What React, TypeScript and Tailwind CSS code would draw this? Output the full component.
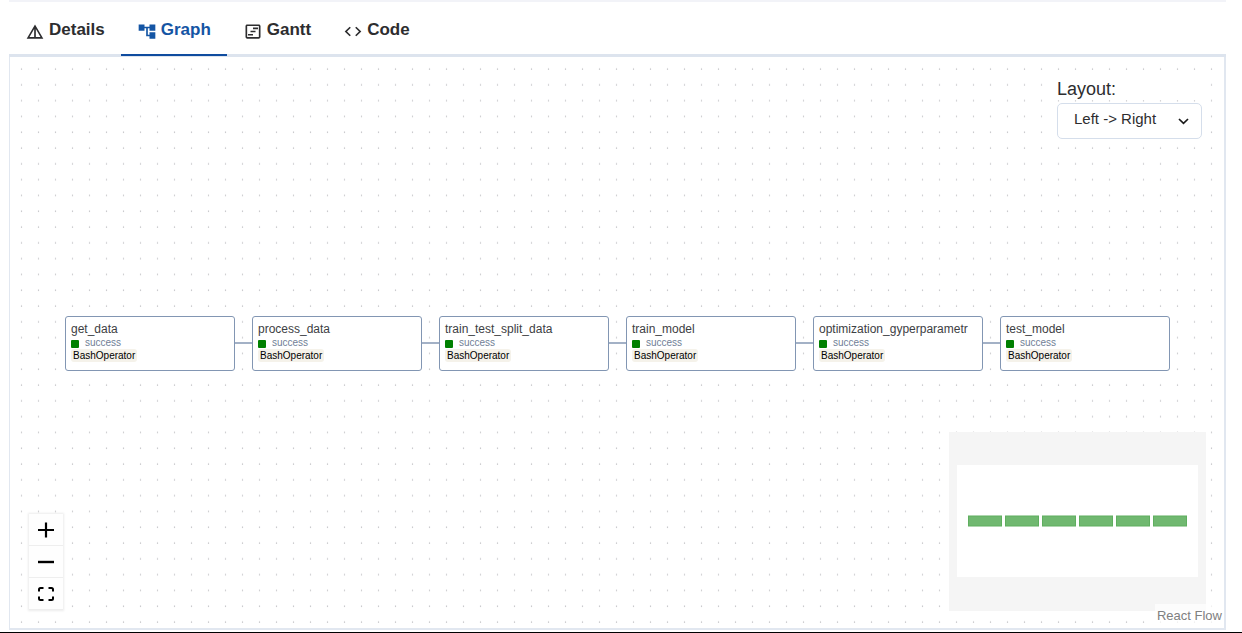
import { useState } from "react";
import { MdAccountTree, MdCode, MdDetails, MdOutlineViewTimeline } from "react-icons/md";

const tabs = [
  { name: "Details", Icon: MdDetails },
  { name: "Graph", Icon: MdAccountTree },
  { name: "Gantt", Icon: MdOutlineViewTimeline },
  { name: "Code", Icon: MdCode },
];

const NODE_WIDTH = 170;
const NODE_TOP = 259;

const nodes = [
  { id: "get_data", x: 55 },
  { id: "process_data", x: 242 },
  { id: "train_test_split_data", x: 429 },
  { id: "train_model", x: 616 },
  { id: "optimization_gyperparametr", x: 803 },
  { id: "test_model", x: 990 },
];

function TaskNode({ id, x }: { id: string; x: number }) {
  return (
    <div
      className="absolute flex h-[55px] flex-col rounded-[3px] border border-[#8296b3] bg-white px-[5px] pt-[5px]"
      style={{ left: x, top: NODE_TOP, width: NODE_WIDTH }}
    >
      <div className="text-[12px] leading-[14px] text-[#3d4043]">{id}</div>
      <div className="flex items-center gap-[6px] text-[10px] leading-[13px] text-[#718096]">
        <span className="mt-[2px] size-2 rounded-[1px] bg-[#008000]" />
        success
      </div>
      <div className="self-start rounded-[3px] bg-[#f5f2ea] px-[2px] text-[10px] leading-[13px] text-black">
        BashOperator
      </div>
    </div>
  );
}

function MiniMap() {
  return (
    <svg className="absolute right-[18px] bottom-[17px]" width="257" height="179" role="img" aria-label="Mini map">
      <rect width="257" height="179" fill="#f5f5f5" />
      <rect x="8" y="33" width="241" height="112" fill="#ffffff" />
      {nodes.map((node, i) => (
        <rect
          key={node.id}
          x={19.5 + i * 37}
          y="84"
          width="33"
          height="10"
          fill="#70b870"
          stroke="#5fae5f"
        />
      ))}
    </svg>
  );
}

function Controls() {
  const button = "flex h-8 w-[34px] items-center justify-center border-b border-[#eeeeee] bg-[#fefefe]";
  return (
    <div className="absolute bottom-[18px] left-[19px] flex flex-col shadow-[0_0_2px_1px_rgba(0,0,0,0.08)]">
      <button className={button} aria-label="Zoom in">
        <svg width="16" height="16" viewBox="0 0 16 16" stroke="#000" strokeWidth="2.2">
          <path d="M8 0.5v15M0 8h16" />
        </svg>
      </button>
      <button className={button} aria-label="Zoom out">
        <svg width="16" height="16" viewBox="0 0 16 16" stroke="#000" strokeWidth="2.4">
          <path d="M0 8h16" />
        </svg>
      </button>
      <button className={button} aria-label="Fit view">
        <svg width="16" height="14" viewBox="0 0 16 14" fill="none" stroke="#000" strokeWidth="2">
          <path d="M1 4.5V2.5Q1 1 2.5 1H5.5M10.5 1H13.5Q15 1 15 2.5V4.5M15 9.5V11.5Q15 13 13.5 13H10.5M5.5 13H2.5Q1 13 1 11.5V9.5" />
        </svg>
      </button>
    </div>
  );
}

export default function App() {
  const [active, setActive] = useState("Graph");
  return (
    <div className="flex h-screen flex-col border-b border-black bg-white font-['Liberation_Sans',Arial,sans-serif]">
      <div className="mr-4 mb-[2px] ml-[9px] flex min-h-0 flex-1 flex-col">
        <div className="h-[2px] shrink-0 bg-[#f2f3f8]" />
        <div role="tablist" className="flex h-[55px] shrink-0 shadow-[inset_0_-3px_0_#dde4ee]">
          {tabs.map(({ name, Icon }) => (
            <button
              key={name}
              role="tab"
              aria-selected={active === name}
              onClick={() => setActive(name)}
              className={
                active === name
                  ? "flex h-[54px] items-start gap-1 border-b-2 border-[#0f4c9f] px-4 pt-[18px] text-[17px] leading-5 font-bold text-[#1455a4]"
                  : "flex h-[54px] items-start gap-1 border-b-2 border-transparent px-4 pt-[18px] text-[17px] leading-5 font-bold text-[#2d2d2f]"
              }
            >
              <Icon className="mt-[2px] h-[19px] w-5" preserveAspectRatio="none" />
              {name}
            </button>
          ))}
        </div>
        <main className="relative min-h-0 flex-1 overflow-hidden border-r-2 border-b-2 border-l border-[#e1e7f0]">
          <svg className="absolute inset-0 h-full w-full" aria-hidden="true">
            <defs>
              <pattern id="dots" x="3" y="4" width="17" height="15.8" patternUnits="userSpaceOnUse">
                <circle cx="8.5" cy="8" r="0.7" fill="#a9a9ad" />
              </pattern>
            </defs>
            <rect width="100%" height="100%" fill="url(#dots)" />
            {nodes.slice(1).map((node, i) => (
              <path
                key={node.id}
                d={`M${nodes[i].x + NODE_WIDTH} 286H${node.x}`}
                stroke="#a3b1c6"
                strokeWidth="2"
              />
            ))}
          </svg>
          {nodes.map((node) => (
            <TaskNode key={node.id} {...node} />
          ))}
          <div className="absolute top-[21px] right-[22px] flex w-[145px] flex-col text-[#2d2d2f]">
            <label htmlFor="layout" className="bg-white text-[18px] leading-[22px]">
              Layout:
            </label>
            <div className="relative mt-[3px]">
              <select
                id="layout"
                defaultValue="lr"
                className="h-9 w-full appearance-none rounded-[5px] border border-[#d5deeb] bg-white pr-8 pb-1 pl-4 text-[15px]"
              >
                <option value="lr">Left -&gt; Right</option>
                <option value="rl">Right -&gt; Left</option>
                <option value="tb">Top -&gt; Bottom</option>
                <option value="bt">Bottom -&gt; Top</option>
              </select>
              <svg
                className="pointer-events-none absolute top-[15px] right-[13px]"
                width="11"
                height="7"
                viewBox="0 0 11 7"
                fill="none"
                stroke="#1a1a1a"
                strokeWidth="1.7"
              >
                <path d="M1 1L5.5 5.3L10 1" />
              </svg>
            </div>
          </div>
          <Controls />
          <MiniMap />
          <a
            href="https://reactflow.dev"
            className="absolute right-0 bottom-0 bg-white/70 px-[2px] text-[13px] leading-[24px] text-[#808080]"
          >
            React Flow
          </a>
        </main>
      </div>
    </div>
  );
}
